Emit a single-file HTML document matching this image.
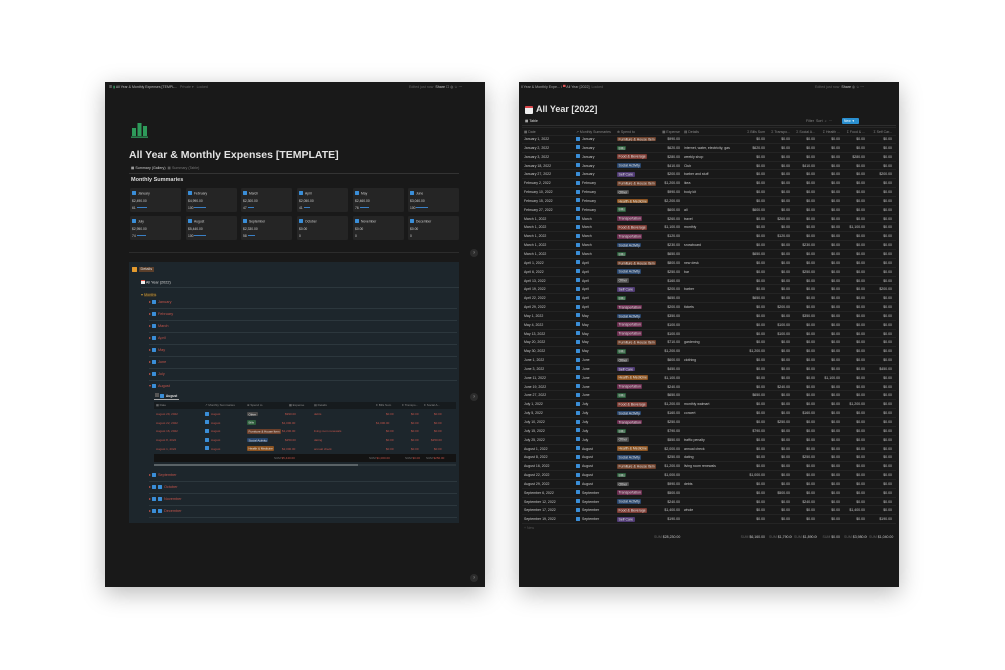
<!DOCTYPE html>
<html><head><meta charset="utf-8"><style>
*{margin:0;padding:0;box-sizing:border-box}
body{width:1005px;height:670px;background:#fff;font-family:"Liberation Sans",sans-serif;position:relative;overflow:hidden;color:#cfcfcf}
.p{position:absolute;background:#191919;box-shadow:0 6px 22px rgba(0,0,0,.28)}
.a{position:absolute;white-space:nowrap}
.t{font-size:3.6px;color:#8d8d8d}
.r{position:absolute;left:3px;width:374px;height:8.85px;border-bottom:1px solid #242424;display:flex;font-size:3.5px;line-height:8px;color:#c8c8c8}
.r i{font-style:normal;display:block;overflow:hidden;white-space:nowrap;padding:0 2px}
.c1{width:52px}.c2{width:41px}.c3{width:45px}.c4{width:22px;text-align:right}.c5{width:63px}.c6{width:22px;text-align:right}.c7,.c8,.c9,.c10{width:25px;text-align:right}.c11{width:27px;text-align:right}
.ic{display:inline-block;width:4px;height:4px;background:#3a8ed8;vertical-align:-0.5px;margin-right:2px;border-radius:.5px}
s{text-decoration:none;padding:.3px 1.5px;border-radius:1px;color:#e6e6e6}
.fu{background:#6b3f2a}.bi{background:#2b5b3a}.fo{background:#7a3a32}.so{background:#28456c}.se{background:#4f3a73}.ot{background:#4a4a4a}.he{background:#8a5220}.tr{background:#6a2e4f}
.card{position:absolute;width:51px;height:24px;background:#252525;border-radius:1.5px;font-size:3.3px;color:#cfcfcf}
.mrow{position:absolute;left:20px;width:308px;height:12px;border-bottom:1px solid #2c373d;font-size:3.8px;color:#c4544a;line-height:10px}
.q{position:absolute;width:8px;height:8px;border-radius:50%;background:#2c2c2c;color:#aaa;font-size:4px;text-align:center;line-height:8px}
</style></head><body>

<!-- LEFT PANEL -->
<div class="p" style="left:105px;top:82px;width:380px;height:505px">
 <div class="a t" style="left:4px;top:3px;font-size:3.5px;color:#bbb">☰ <span style="color:#3aa66a">▮</span> All Year &amp; Monthly Expenses [TEMPL... &nbsp; <span style="color:#666">Private ▾ &nbsp; Locked</span></div>
 <div class="a t" style="left:304px;top:3px;color:#666">Edited just now &nbsp;<span style="color:#ccc">Share</span> <span style="color:#bbb">☐ ◎ ☆ ···</span></div>
 <svg class="a" style="left:26px;top:40px" width="18" height="16" viewBox="0 0 18 16"><rect x="1" y="6" width="4" height="8" fill="#2e9a5a"/><rect x="6.5" y="1" width="4" height="13" fill="#2e9a5a"/><rect x="12" y="4" width="4" height="10" fill="#2e9a5a"/><rect x="0" y="14.5" width="17" height="1.3" fill="#2e9a5a"/></svg>
 <div class="a" style="left:24px;top:67px;font-size:10.5px;font-weight:bold;color:#e3e3e3">All Year &amp; Monthly Expenses [TEMPLATE]</div>
 <div class="a t" style="left:26px;top:84px;color:#cfcfcf">▦ Summary (Gallery) &nbsp;<span style="color:#777">▦ Summary (Table)</span></div>
 <div class="a" style="left:26px;top:90.5px;width:37px;height:.8px;background:#ccc"></div>
 <div class="a" style="left:24px;top:91.3px;width:330px;height:.5px;background:#333"></div>
 <div class="a" style="left:26px;top:95px;font-size:5.5px;font-weight:bold;color:#ddd">Monthly Summaries</div>

 <div class="card" style="left:25px;top:106px"><div class="a" style="left:2px;top:3px"><span class="ic"></span>January</div><div class="a" style="left:2px;top:11px">$2,490.00</div><div class="a" style="left:2px;top:18px">61 <span style="display:inline-block;width:10px;height:1px;background:#3a7fc4;vertical-align:1px"></span></div></div>
 <div class="card" style="left:81px;top:106px"><div class="a" style="left:2px;top:3px"><span class="ic"></span>February</div><div class="a" style="left:2px;top:11px">$4,990.00</div><div class="a" style="left:2px;top:18px">100 <span style="display:inline-block;width:12px;height:1px;background:#3a7fc4;vertical-align:1px"></span></div></div>
 <div class="card" style="left:136px;top:106px"><div class="a" style="left:2px;top:3px"><span class="ic"></span>March</div><div class="a" style="left:2px;top:11px">$2,300.00</div><div class="a" style="left:2px;top:18px">47 <span style="display:inline-block;width:6px;height:1px;background:#3a7fc4;vertical-align:1px"></span></div></div>
 <div class="card" style="left:192px;top:106px"><div class="a" style="left:2px;top:3px"><span class="ic"></span>April</div><div class="a" style="left:2px;top:11px">$2,050.00</div><div class="a" style="left:2px;top:18px">41 <span style="display:inline-block;width:6px;height:1px;background:#3a7fc4;vertical-align:1px"></span></div></div>
 <div class="card" style="left:248px;top:106px"><div class="a" style="left:2px;top:3px"><span class="ic"></span>May</div><div class="a" style="left:2px;top:11px">$2,460.00</div><div class="a" style="left:2px;top:18px">76 <span style="display:inline-block;width:9px;height:1px;background:#3a7fc4;vertical-align:1px"></span></div></div>
 <div class="card" style="left:303px;top:106px"><div class="a" style="left:2px;top:3px"><span class="ic"></span>June</div><div class="a" style="left:2px;top:11px">$3,040.00</div><div class="a" style="left:2px;top:18px">100 <span style="display:inline-block;width:12px;height:1px;background:#3a7fc4;vertical-align:1px"></span></div></div>
 <div class="card" style="left:25px;top:134px"><div class="a" style="left:2px;top:3px"><span class="ic"></span>July</div><div class="a" style="left:2px;top:11px">$2,950.00</div><div class="a" style="left:2px;top:18px">74 <span style="display:inline-block;width:9px;height:1px;background:#3a7fc4;vertical-align:1px"></span></div></div>
 <div class="card" style="left:81px;top:134px"><div class="a" style="left:2px;top:3px"><span class="ic"></span>August</div><div class="a" style="left:2px;top:11px">$5,440.00</div><div class="a" style="left:2px;top:18px">100 <span style="display:inline-block;width:12px;height:1px;background:#3a7fc4;vertical-align:1px"></span></div></div>
 <div class="card" style="left:136px;top:134px"><div class="a" style="left:2px;top:3px"><span class="ic"></span>September</div><div class="a" style="left:2px;top:11px">$2,330.00</div><div class="a" style="left:2px;top:18px">58 <span style="display:inline-block;width:7px;height:1px;background:#3a7fc4;vertical-align:1px"></span></div></div>
 <div class="card" style="left:192px;top:134px"><div class="a" style="left:2px;top:3px"><span class="ic"></span>October</div><div class="a" style="left:2px;top:11px">$0.00</div><div class="a" style="left:2px;top:18px">0</div></div>
 <div class="card" style="left:248px;top:134px"><div class="a" style="left:2px;top:3px"><span class="ic"></span>November</div><div class="a" style="left:2px;top:11px">$0.00</div><div class="a" style="left:2px;top:18px">0</div></div>
 <div class="card" style="left:303px;top:134px"><div class="a" style="left:2px;top:3px"><span class="ic"></span>December</div><div class="a" style="left:2px;top:11px">$0.00</div><div class="a" style="left:2px;top:18px">0</div></div>
 <div class="a" style="left:24px;top:170px;width:330px;height:.5px;background:#2c2c2c"></div>

 <div class="q" style="left:365px;top:167px">?</div>
 <div class="q" style="left:365px;top:311px">?</div>
 <div class="q" style="left:365px;top:492px">?</div>

 <div class="a" style="left:24px;top:180px;width:330px;height:261px;background:#1d262c">
  <div class="a" style="left:3px;top:5px;width:5px;height:5px;background:#e39a2e;border-radius:.5px"></div>
  <div class="a" style="left:10px;top:4.5px;font-size:3.8px;padding:.5px 1.5px;background:#5b3f2b;color:#ddd">Details</div>
  <div class="a" style="left:12px;top:18px;font-size:3.8px;color:#ddd"><span style="display:inline-block;width:4px;height:4px;background:#eee;border-top:1.2px solid #d54;vertical-align:-.5px"></span> All Year (2022)</div>
  <div class="a" style="left:12px;top:25px;width:318px;height:.5px;background:#2c373d"></div>
  <div class="a" style="left:12px;top:30px;font-size:3.8px;color:#b8903a">▾ <span style="background:#3c3526">Months</span></div>
  <div class="mrow" style="top:35px">▸ <span class="ic"></span>January</div>
  <div class="mrow" style="top:47px">▸ <span class="ic"></span>February</div>
  <div class="mrow" style="top:59px">▸ <span class="ic"></span>March</div>
  <div class="mrow" style="top:71px">▸ <span class="ic"></span>April</div>
  <div class="mrow" style="top:83px">▸ <span class="ic"></span>May</div>
  <div class="mrow" style="top:95px">▸ <span class="ic"></span>June</div>
  <div class="mrow" style="top:107px">▸ <span class="ic"></span>July</div>
  <div class="a" style="left:20px;top:119px;font-size:3.8px;color:#c4544a;line-height:10px">▾ <span class="ic"></span>August</div>
  <div class="a" style="left:26px;top:131px;font-size:3.3px;color:#ddd"><span style="display:inline-block;width:4px;height:4px;background:#555"></span> <span class="ic"></span><b>August</b></div>
  <div class="a" style="left:25px;top:137px;width:25px;height:.7px;background:#aaa"></div>
  <div class="a" style="left:25px;top:140px;width:302px;height:7px;background:#161b1e;font-size:3px;color:#888;line-height:7px">
   <span class="a" style="left:2px">▦ Date</span><span class="a" style="left:51px">↗ Monthly Summaries</span><span class="a" style="left:93px">⊕ Spend to</span><span class="a" style="left:135px">▦ Expense</span><span class="a" style="left:160px">▤ Details</span><span class="a" style="left:222px">Σ Bills Sum</span><span class="a" style="left:248px">Σ Transpo...</span><span class="a" style="left:270px">Σ Social A...</span>
  </div>
  <div class="a" style="left:25px;top:148px;width:302px;font-size:3px;color:#c4544a;line-height:8.7px">
   <div style="position:relative;height:8.7px"><span class="a" style="left:2px">August 29, 2022</span><span class="a" style="left:51px"><span class="ic"></span>August</span><span class="a" style="left:93px"><s class="ot">Other</s></span><span class="a" style="left:131px">$990.00</span><span class="a" style="left:160px">debts</span><span class="a" style="left:232px">$0.00</span><span class="a" style="left:257px">$0.00</span><span class="a" style="left:280px">$0.00</span></div>
   <div style="position:relative;height:8.7px"><span class="a" style="left:2px">August 22, 2022</span><span class="a" style="left:51px"><span class="ic"></span>August</span><span class="a" style="left:93px"><s class="bi">Bills</s></span><span class="a" style="left:128px">$1,000.00</span><span class="a" style="left:222px">$1,000.00</span><span class="a" style="left:257px">$0.00</span><span class="a" style="left:280px">$0.00</span></div>
   <div style="position:relative;height:8.7px"><span class="a" style="left:2px">August 16, 2022</span><span class="a" style="left:51px"><span class="ic"></span>August</span><span class="a" style="left:93px"><s class="fu">Furniture &amp; House Item</s></span><span class="a" style="left:128px">$1,200.00</span><span class="a" style="left:160px">living room renewals</span><span class="a" style="left:232px">$0.00</span><span class="a" style="left:257px">$0.00</span><span class="a" style="left:280px">$0.00</span></div>
   <div style="position:relative;height:8.7px"><span class="a" style="left:2px">August 8, 2022</span><span class="a" style="left:51px"><span class="ic"></span>August</span><span class="a" style="left:93px"><s class="so">Social Activity</s></span><span class="a" style="left:131px">$250.00</span><span class="a" style="left:160px">dating</span><span class="a" style="left:232px">$0.00</span><span class="a" style="left:257px">$0.00</span><span class="a" style="left:277px">$250.00</span></div>
   <div style="position:relative;height:8.7px"><span class="a" style="left:2px">August 1, 2022</span><span class="a" style="left:51px"><span class="ic"></span>August</span><span class="a" style="left:93px"><s class="he">Health &amp; Medicine</s></span><span class="a" style="left:128px">$2,000.00</span><span class="a" style="left:160px">annual check</span><span class="a" style="left:232px">$0.00</span><span class="a" style="left:257px">$0.00</span><span class="a" style="left:280px">$0.00</span></div>
  </div>
  <div class="a" style="left:25px;top:192px;width:302px;height:8px;background:#131313;font-size:3px;color:#c4544a;line-height:8px"><span class="a" style="left:120px"><span style="color:#777">SUM</span> $5,440.00</span><span class="a" style="left:215px"><span style="color:#777">SUM</span> $1,000.00</span><span class="a" style="left:251px"><span style="color:#777">SUM</span> $0.00</span><span class="a" style="left:272px"><span style="color:#777">SUM</span> $250.00</span></div>
  <div class="a" style="left:25px;top:201.5px;width:302px;height:2px;background:#2a3338"></div>
  <div class="a" style="left:25px;top:201.5px;width:204px;height:2px;background:#5a6266"></div>
  <div class="mrow" style="top:208px">▸ <span class="ic"></span>September</div>
  <div class="mrow" style="top:220px">▸ <span class="ic"></span><span class="ic"></span>October</div>
  <div class="mrow" style="top:232px">▸ <span class="ic"></span><span class="ic"></span>November</div>
  <div class="mrow" style="top:244px">▸ <span class="ic"></span><span class="ic"></span>December</div>
 </div>
</div>

<!-- RIGHT PANEL -->
<div class="p" style="left:519px;top:82px;width:380px;height:505px">
 <div class="a t" style="left:2px;top:3px;color:#aaa">ll Year &amp; Monthly Expe... / <span style="color:#d55">▀</span> All Year [2022] &nbsp;<span style="color:#666">Locked</span></div>
 <div class="a t" style="left:296px;top:3px;color:#666">Edited just now &nbsp;<span style="color:#ccc">Share</span> <span style="color:#bbb">◎ ☆ ···</span></div>
 <div class="a" style="left:6px;top:24px;width:8px;height:8px;background:#eee;border-top:2.5px solid #d9474b;border-radius:1px"></div>
 <div class="a" style="left:17px;top:22px;font-size:9px;font-weight:bold;color:#e3e3e3">All Year [2022]</div>
 <div class="a t" style="left:6px;top:37px;color:#ddd">▦ Table</div>
 <div class="a" style="left:5px;top:42.5px;width:17px;height:.7px;background:#ccc"></div>
 <div class="a" style="left:3px;top:43.2px;width:374px;height:.5px;background:#2e2e2e"></div>
 <div class="a t" style="left:287px;top:37px;color:#888">Filter &nbsp;Sort &nbsp;⌕ &nbsp;···</div>
 <div class="a" style="left:323px;top:36px;width:17px;height:6px;background:#2a8fd0;border-radius:1px;font-size:3.3px;color:#fff;line-height:6px;padding-left:2px">New &nbsp;▾</div>
 <div class="r" style="top:45px;color:#888;border-top:1px solid #262626"><i class="c1">▦ Date</i><i class="c2">↗ Monthly Summaries</i><i class="c3">⊕ Spend to</i><i class="c4">▦ Expense</i><i class="c5">▤ Details</i><i class="c6">Σ Bills Sum</i><i class="c7">Σ Transpo...</i><i class="c8">Σ Social A...</i><i class="c9">Σ Health ...</i><i class="c10">Σ Food &amp; ...</i><i class="c11">Σ Self Car...</i></div>
 <div class="a" style="left:0;top:53px;width:380px">
<div class="r" style="position:relative"><i class="c1">January 1, 2022</i><i class="c2"><span class="ic"></span>January</i><i class="c3"><s class="fu">Furniture &amp; House Item</s></i><i class="c4">$990.00</i><i class="c5"></i><i class="c6">$0.00</i><i class="c7">$0.00</i><i class="c8">$0.00</i><i class="c9">$0.00</i><i class="c10">$0.00</i><i class="c11">$0.00</i></div>
<div class="r" style="position:relative"><i class="c1">January 2, 2022</i><i class="c2"><span class="ic"></span>January</i><i class="c3"><s class="bi">Bills</s></i><i class="c4">$620.00</i><i class="c5">internet, water, electricity, gas</i><i class="c6">$620.00</i><i class="c7">$0.00</i><i class="c8">$0.00</i><i class="c9">$0.00</i><i class="c10">$0.00</i><i class="c11">$0.00</i></div>
<div class="r" style="position:relative"><i class="c1">January 3, 2022</i><i class="c2"><span class="ic"></span>January</i><i class="c3"><s class="fo">Food &amp; Beverage</s></i><i class="c4">$280.00</i><i class="c5">weekly shop</i><i class="c6">$0.00</i><i class="c7">$0.00</i><i class="c8">$0.00</i><i class="c9">$0.00</i><i class="c10">$280.00</i><i class="c11">$0.00</i></div>
<div class="r" style="position:relative"><i class="c1">January 18, 2022</i><i class="c2"><span class="ic"></span>January</i><i class="c3"><s class="so">Social Activity</s></i><i class="c4">$410.00</i><i class="c5">Club</i><i class="c6">$0.00</i><i class="c7">$0.00</i><i class="c8">$410.00</i><i class="c9">$0.00</i><i class="c10">$0.00</i><i class="c11">$0.00</i></div>
<div class="r" style="position:relative"><i class="c1">January 27, 2022</i><i class="c2"><span class="ic"></span>January</i><i class="c3"><s class="se">Self Care</s></i><i class="c4">$200.00</i><i class="c5">barber and stuff</i><i class="c6">$0.00</i><i class="c7">$0.00</i><i class="c8">$0.00</i><i class="c9">$0.00</i><i class="c10">$0.00</i><i class="c11">$200.00</i></div>
<div class="r" style="position:relative"><i class="c1">February 2, 2022</i><i class="c2"><span class="ic"></span>February</i><i class="c3"><s class="fu">Furniture &amp; House Item</s></i><i class="c4">$1,200.00</i><i class="c5">ikea</i><i class="c6">$0.00</i><i class="c7">$0.00</i><i class="c8">$0.00</i><i class="c9">$0.00</i><i class="c10">$0.00</i><i class="c11">$0.00</i></div>
<div class="r" style="position:relative"><i class="c1">February 10, 2022</i><i class="c2"><span class="ic"></span>February</i><i class="c3"><s class="ot">Other</s></i><i class="c4">$990.00</i><i class="c5">body kit</i><i class="c6">$0.00</i><i class="c7">$0.00</i><i class="c8">$0.00</i><i class="c9">$0.00</i><i class="c10">$0.00</i><i class="c11">$0.00</i></div>
<div class="r" style="position:relative"><i class="c1">February 15, 2022</i><i class="c2"><span class="ic"></span>February</i><i class="c3"><s class="he">Health &amp; Medicine</s></i><i class="c4">$2,200.00</i><i class="c5"></i><i class="c6">$0.00</i><i class="c7">$0.00</i><i class="c8">$0.00</i><i class="c9">$0.00</i><i class="c10">$0.00</i><i class="c11">$0.00</i></div>
<div class="r" style="position:relative"><i class="c1">February 27, 2022</i><i class="c2"><span class="ic"></span>February</i><i class="c3"><s class="bi">Bills</s></i><i class="c4">$600.00</i><i class="c5">all</i><i class="c6">$600.00</i><i class="c7">$0.00</i><i class="c8">$0.00</i><i class="c9">$0.00</i><i class="c10">$0.00</i><i class="c11">$0.00</i></div>
<div class="r" style="position:relative"><i class="c1">March 1, 2022</i><i class="c2"><span class="ic"></span>March</i><i class="c3"><s class="tr">Transportation</s></i><i class="c4">$260.00</i><i class="c5">travel</i><i class="c6">$0.00</i><i class="c7">$260.00</i><i class="c8">$0.00</i><i class="c9">$0.00</i><i class="c10">$0.00</i><i class="c11">$0.00</i></div>
<div class="r" style="position:relative"><i class="c1">March 1, 2022</i><i class="c2"><span class="ic"></span>March</i><i class="c3"><s class="fo">Food &amp; Beverage</s></i><i class="c4">$1,100.00</i><i class="c5">monthly</i><i class="c6">$0.00</i><i class="c7">$0.00</i><i class="c8">$0.00</i><i class="c9">$0.00</i><i class="c10">$1,100.00</i><i class="c11">$0.00</i></div>
<div class="r" style="position:relative"><i class="c1">March 1, 2022</i><i class="c2"><span class="ic"></span>March</i><i class="c3"><s class="tr">Transportation</s></i><i class="c4">$120.00</i><i class="c5"></i><i class="c6">$0.00</i><i class="c7">$120.00</i><i class="c8">$0.00</i><i class="c9">$0.00</i><i class="c10">$0.00</i><i class="c11">$0.00</i></div>
<div class="r" style="position:relative"><i class="c1">March 1, 2022</i><i class="c2"><span class="ic"></span>March</i><i class="c3"><s class="so">Social Activity</s></i><i class="c4">$230.00</i><i class="c5">snowboard</i><i class="c6">$0.00</i><i class="c7">$0.00</i><i class="c8">$230.00</i><i class="c9">$0.00</i><i class="c10">$0.00</i><i class="c11">$0.00</i></div>
<div class="r" style="position:relative"><i class="c1">March 1, 2022</i><i class="c2"><span class="ic"></span>March</i><i class="c3"><s class="bi">Bills</s></i><i class="c4">$650.00</i><i class="c5"></i><i class="c6">$650.00</i><i class="c7">$0.00</i><i class="c8">$0.00</i><i class="c9">$0.00</i><i class="c10">$0.00</i><i class="c11">$0.00</i></div>
<div class="r" style="position:relative"><i class="c1">April 1, 2022</i><i class="c2"><span class="ic"></span>April</i><i class="c3"><s class="fu">Furniture &amp; House Item</s></i><i class="c4">$800.00</i><i class="c5">new desk</i><i class="c6">$0.00</i><i class="c7">$0.00</i><i class="c8">$0.00</i><i class="c9">$0.00</i><i class="c10">$0.00</i><i class="c11">$0.00</i></div>
<div class="r" style="position:relative"><i class="c1">April 6, 2022</i><i class="c2"><span class="ic"></span>April</i><i class="c3"><s class="so">Social Activity</s></i><i class="c4">$250.00</i><i class="c5">bar</i><i class="c6">$0.00</i><i class="c7">$0.00</i><i class="c8">$250.00</i><i class="c9">$0.00</i><i class="c10">$0.00</i><i class="c11">$0.00</i></div>
<div class="r" style="position:relative"><i class="c1">April 13, 2022</i><i class="c2"><span class="ic"></span>April</i><i class="c3"><s class="ot">Other</s></i><i class="c4">$160.00</i><i class="c5"></i><i class="c6">$0.00</i><i class="c7">$0.00</i><i class="c8">$0.00</i><i class="c9">$0.00</i><i class="c10">$0.00</i><i class="c11">$0.00</i></div>
<div class="r" style="position:relative"><i class="c1">April 19, 2022</i><i class="c2"><span class="ic"></span>April</i><i class="c3"><s class="se">Self Care</s></i><i class="c4">$200.00</i><i class="c5">barber</i><i class="c6">$0.00</i><i class="c7">$0.00</i><i class="c8">$0.00</i><i class="c9">$0.00</i><i class="c10">$0.00</i><i class="c11">$200.00</i></div>
<div class="r" style="position:relative"><i class="c1">April 22, 2022</i><i class="c2"><span class="ic"></span>April</i><i class="c3"><s class="bi">Bills</s></i><i class="c4">$650.00</i><i class="c5"></i><i class="c6">$650.00</i><i class="c7">$0.00</i><i class="c8">$0.00</i><i class="c9">$0.00</i><i class="c10">$0.00</i><i class="c11">$0.00</i></div>
<div class="r" style="position:relative"><i class="c1">April 29, 2022</i><i class="c2"><span class="ic"></span>April</i><i class="c3"><s class="tr">Transportation</s></i><i class="c4">$200.00</i><i class="c5">tickets</i><i class="c6">$0.00</i><i class="c7">$200.00</i><i class="c8">$0.00</i><i class="c9">$0.00</i><i class="c10">$0.00</i><i class="c11">$0.00</i></div>
<div class="r" style="position:relative"><i class="c1">May 1, 2022</i><i class="c2"><span class="ic"></span>May</i><i class="c3"><s class="so">Social Activity</s></i><i class="c4">$350.00</i><i class="c5"></i><i class="c6">$0.00</i><i class="c7">$0.00</i><i class="c8">$350.00</i><i class="c9">$0.00</i><i class="c10">$0.00</i><i class="c11">$0.00</i></div>
<div class="r" style="position:relative"><i class="c1">May 4, 2022</i><i class="c2"><span class="ic"></span>May</i><i class="c3"><s class="tr">Transportation</s></i><i class="c4">$100.00</i><i class="c5"></i><i class="c6">$0.00</i><i class="c7">$100.00</i><i class="c8">$0.00</i><i class="c9">$0.00</i><i class="c10">$0.00</i><i class="c11">$0.00</i></div>
<div class="r" style="position:relative"><i class="c1">May 13, 2022</i><i class="c2"><span class="ic"></span>May</i><i class="c3"><s class="tr">Transportation</s></i><i class="c4">$100.00</i><i class="c5"></i><i class="c6">$0.00</i><i class="c7">$100.00</i><i class="c8">$0.00</i><i class="c9">$0.00</i><i class="c10">$0.00</i><i class="c11">$0.00</i></div>
<div class="r" style="position:relative"><i class="c1">May 20, 2022</i><i class="c2"><span class="ic"></span>May</i><i class="c3"><s class="fu">Furniture &amp; House Item</s></i><i class="c4">$710.00</i><i class="c5">gardening</i><i class="c6">$0.00</i><i class="c7">$0.00</i><i class="c8">$0.00</i><i class="c9">$0.00</i><i class="c10">$0.00</i><i class="c11">$0.00</i></div>
<div class="r" style="position:relative"><i class="c1">May 30, 2022</i><i class="c2"><span class="ic"></span>May</i><i class="c3"><s class="bi">Bills</s></i><i class="c4">$1,200.00</i><i class="c5"></i><i class="c6">$1,200.00</i><i class="c7">$0.00</i><i class="c8">$0.00</i><i class="c9">$0.00</i><i class="c10">$0.00</i><i class="c11">$0.00</i></div>
<div class="r" style="position:relative"><i class="c1">June 1, 2022</i><i class="c2"><span class="ic"></span>June</i><i class="c3"><s class="ot">Other</s></i><i class="c4">$600.00</i><i class="c5">clothing</i><i class="c6">$0.00</i><i class="c7">$0.00</i><i class="c8">$0.00</i><i class="c9">$0.00</i><i class="c10">$0.00</i><i class="c11">$0.00</i></div>
<div class="r" style="position:relative"><i class="c1">June 3, 2022</i><i class="c2"><span class="ic"></span>June</i><i class="c3"><s class="se">Self Care</s></i><i class="c4">$450.00</i><i class="c5"></i><i class="c6">$0.00</i><i class="c7">$0.00</i><i class="c8">$0.00</i><i class="c9">$0.00</i><i class="c10">$0.00</i><i class="c11">$450.00</i></div>
<div class="r" style="position:relative"><i class="c1">June 11, 2022</i><i class="c2"><span class="ic"></span>June</i><i class="c3"><s class="he">Health &amp; Medicine</s></i><i class="c4">$1,100.00</i><i class="c5"></i><i class="c6">$0.00</i><i class="c7">$0.00</i><i class="c8">$0.00</i><i class="c9">$1,100.00</i><i class="c10">$0.00</i><i class="c11">$0.00</i></div>
<div class="r" style="position:relative"><i class="c1">June 19, 2022</i><i class="c2"><span class="ic"></span>June</i><i class="c3"><s class="tr">Transportation</s></i><i class="c4">$240.00</i><i class="c5"></i><i class="c6">$0.00</i><i class="c7">$240.00</i><i class="c8">$0.00</i><i class="c9">$0.00</i><i class="c10">$0.00</i><i class="c11">$0.00</i></div>
<div class="r" style="position:relative"><i class="c1">June 27, 2022</i><i class="c2"><span class="ic"></span>June</i><i class="c3"><s class="bi">Bills</s></i><i class="c4">$650.00</i><i class="c5"></i><i class="c6">$650.00</i><i class="c7">$0.00</i><i class="c8">$0.00</i><i class="c9">$0.00</i><i class="c10">$0.00</i><i class="c11">$0.00</i></div>
<div class="r" style="position:relative"><i class="c1">July 1, 2022</i><i class="c2"><span class="ic"></span>July</i><i class="c3"><s class="fo">Food &amp; Beverage</s></i><i class="c4">$1,200.00</i><i class="c5">monthly walmart</i><i class="c6">$0.00</i><i class="c7">$0.00</i><i class="c8">$0.00</i><i class="c9">$0.00</i><i class="c10">$1,200.00</i><i class="c11">$0.00</i></div>
<div class="r" style="position:relative"><i class="c1">July 5, 2022</i><i class="c2"><span class="ic"></span>July</i><i class="c3"><s class="so">Social Activity</s></i><i class="c4">$160.00</i><i class="c5">concert</i><i class="c6">$0.00</i><i class="c7">$0.00</i><i class="c8">$160.00</i><i class="c9">$0.00</i><i class="c10">$0.00</i><i class="c11">$0.00</i></div>
<div class="r" style="position:relative"><i class="c1">July 10, 2022</i><i class="c2"><span class="ic"></span>July</i><i class="c3"><s class="tr">Transportation</s></i><i class="c4">$250.00</i><i class="c5"></i><i class="c6">$0.00</i><i class="c7">$250.00</i><i class="c8">$0.00</i><i class="c9">$0.00</i><i class="c10">$0.00</i><i class="c11">$0.00</i></div>
<div class="r" style="position:relative"><i class="c1">July 15, 2022</i><i class="c2"><span class="ic"></span>July</i><i class="c3"><s class="bi">Bills</s></i><i class="c4">$790.00</i><i class="c5"></i><i class="c6">$790.00</i><i class="c7">$0.00</i><i class="c8">$0.00</i><i class="c9">$0.00</i><i class="c10">$0.00</i><i class="c11">$0.00</i></div>
<div class="r" style="position:relative"><i class="c1">July 25, 2022</i><i class="c2"><span class="ic"></span>July</i><i class="c3"><s class="ot">Other</s></i><i class="c4">$550.00</i><i class="c5">traffic penalty</i><i class="c6">$0.00</i><i class="c7">$0.00</i><i class="c8">$0.00</i><i class="c9">$0.00</i><i class="c10">$0.00</i><i class="c11">$0.00</i></div>
<div class="r" style="position:relative"><i class="c1">August 1, 2022</i><i class="c2"><span class="ic"></span>August</i><i class="c3"><s class="he">Health &amp; Medicine</s></i><i class="c4">$2,000.00</i><i class="c5">annual check</i><i class="c6">$0.00</i><i class="c7">$0.00</i><i class="c8">$0.00</i><i class="c9">$0.00</i><i class="c10">$0.00</i><i class="c11">$0.00</i></div>
<div class="r" style="position:relative"><i class="c1">August 8, 2022</i><i class="c2"><span class="ic"></span>August</i><i class="c3"><s class="so">Social Activity</s></i><i class="c4">$250.00</i><i class="c5">dating</i><i class="c6">$0.00</i><i class="c7">$0.00</i><i class="c8">$250.00</i><i class="c9">$0.00</i><i class="c10">$0.00</i><i class="c11">$0.00</i></div>
<div class="r" style="position:relative"><i class="c1">August 16, 2022</i><i class="c2"><span class="ic"></span>August</i><i class="c3"><s class="fu">Furniture &amp; House Item</s></i><i class="c4">$1,200.00</i><i class="c5">living room renewals</i><i class="c6">$0.00</i><i class="c7">$0.00</i><i class="c8">$0.00</i><i class="c9">$0.00</i><i class="c10">$0.00</i><i class="c11">$0.00</i></div>
<div class="r" style="position:relative"><i class="c1">August 22, 2022</i><i class="c2"><span class="ic"></span>August</i><i class="c3"><s class="bi">Bills</s></i><i class="c4">$1,000.00</i><i class="c5"></i><i class="c6">$1,000.00</i><i class="c7">$0.00</i><i class="c8">$0.00</i><i class="c9">$0.00</i><i class="c10">$0.00</i><i class="c11">$0.00</i></div>
<div class="r" style="position:relative"><i class="c1">August 29, 2022</i><i class="c2"><span class="ic"></span>August</i><i class="c3"><s class="ot">Other</s></i><i class="c4">$990.00</i><i class="c5">debts</i><i class="c6">$0.00</i><i class="c7">$0.00</i><i class="c8">$0.00</i><i class="c9">$0.00</i><i class="c10">$0.00</i><i class="c11">$0.00</i></div>
<div class="r" style="position:relative"><i class="c1">September 6, 2022</i><i class="c2"><span class="ic"></span>September</i><i class="c3"><s class="tr">Transportation</s></i><i class="c4">$500.00</i><i class="c5"></i><i class="c6">$0.00</i><i class="c7">$500.00</i><i class="c8">$0.00</i><i class="c9">$0.00</i><i class="c10">$0.00</i><i class="c11">$0.00</i></div>
<div class="r" style="position:relative"><i class="c1">September 12, 2022</i><i class="c2"><span class="ic"></span>September</i><i class="c3"><s class="so">Social Activity</s></i><i class="c4">$240.00</i><i class="c5"></i><i class="c6">$0.00</i><i class="c7">$0.00</i><i class="c8">$240.00</i><i class="c9">$0.00</i><i class="c10">$0.00</i><i class="c11">$0.00</i></div>
<div class="r" style="position:relative"><i class="c1">September 17, 2022</i><i class="c2"><span class="ic"></span>September</i><i class="c3"><s class="fo">Food &amp; Beverage</s></i><i class="c4">$1,400.00</i><i class="c5">whole</i><i class="c6">$0.00</i><i class="c7">$0.00</i><i class="c8">$0.00</i><i class="c9">$0.00</i><i class="c10">$1,400.00</i><i class="c11">$0.00</i></div>
<div class="r" style="position:relative"><i class="c1">September 19, 2022</i><i class="c2"><span class="ic"></span>September</i><i class="c3"><s class="se">Self Care</s></i><i class="c4">$190.00</i><i class="c5"></i><i class="c6">$0.00</i><i class="c7">$0.00</i><i class="c8">$0.00</i><i class="c9">$0.00</i><i class="c10">$0.00</i><i class="c11">$190.00</i></div>
<div class="r" style="position:relative;color:#555;border:none"><i class="c1">+ New</i></div>
<div class="r" style="position:relative;border:none"><i class="c1"></i><i class="c2"></i><i class="c3"></i><i class="c4" style="width:30px;margin-left:-8px"><span style="color:#666">SUM</span> $28,230.00</i><i class="c5"></i><i class="c6" style="width:30px;margin-left:-8px"><span style="color:#666">SUM</span> $6,160.00</i><i class="c7"><span style="color:#666">SUM</span> $1,790.00</i><i class="c8"><span style="color:#666">SUM</span> $1,890.00</i><i class="c9"><span style="color:#666">SUM</span> $0.00</i><i class="c10"><span style="color:#666">SUM</span> $3,980.00</i><i class="c11"><span style="color:#666">SUM</span> $1,040.00</i></div>
 </div>
</div>
</body></html>
